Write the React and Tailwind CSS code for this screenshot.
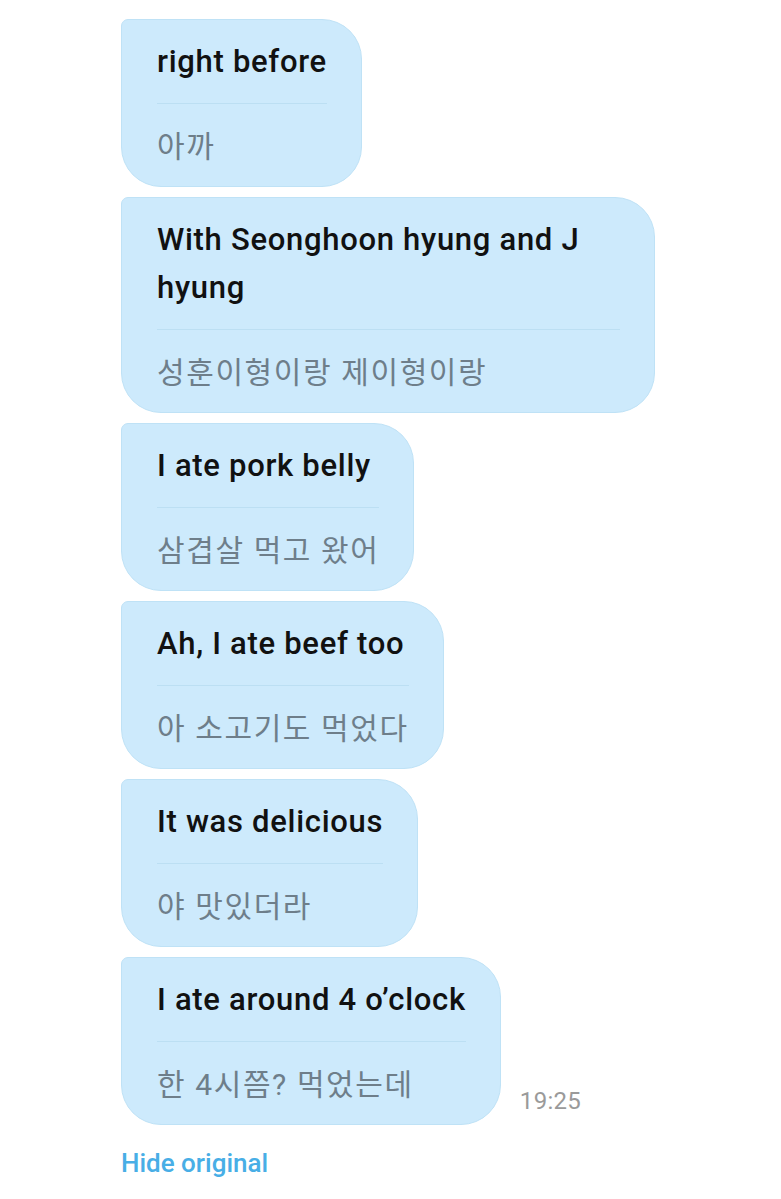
const messages = [
    { en: "right before", ko: "아까" },
    { en: "With Seonghoon hyung and J hyung", ko: "성훈이형이랑 제이형이랑" },
    { en: "I ate pork belly", ko: "삼겹살 먹고 왔어" },
    { en: "Ah, I ate beef too", ko: "아 소고기도 먹었다" },
    { en: "It was delicious", ko: "야 맛있더라" },
    { en: "I ate around 4 o’clock", ko: "한 4시쯤? 먹었는데", time: "19:25" },
];

function Bubble({ en, ko }) {
    return (
        <div className="w-fit max-w-[534px] rounded-[40px] rounded-tl-[7px] border border-[#bfe2f6] bg-[#cdeafc] pl-[35px] pr-[34px] pt-[18px] pb-[15px]">
            <p className="text-[31px] leading-[48px] tracking-[0.7px] font-medium text-[#111]">{en}</p>
            <div className="mt-[17px] mb-[19px] h-px bg-[#bcdff3]" />
            <p className="text-[30px] leading-[48px] tracking-[1.6px] text-[#6e7e8a]">{ko}</p>
        </div>
    );
}

export default function App() {
    return (
        <div
            className="min-h-[1199px] bg-white pl-[121px] pt-[19px]"
            style={{ fontFamily: "Roboto, 'Noto Sans CJK KR', sans-serif" }}
        >
            <div className="flex flex-col gap-[10px]">
                {messages.map((m, i) => (
                    <div key={i} className="flex items-end gap-[19px]">
                        <Bubble en={m.en} ko={m.ko} />
                        {m.time && (
                            <span className="mb-[12px] text-[24px] leading-none tracking-[0.3px] text-[#9a9a9a]">
                                {m.time}
                            </span>
                        )}
                    </div>
                ))}
            </div>
            <button className="mt-[22px] text-[26px] leading-[32px] font-medium text-[#48aee6]">
                Hide original
            </button>
        </div>
    );
}
